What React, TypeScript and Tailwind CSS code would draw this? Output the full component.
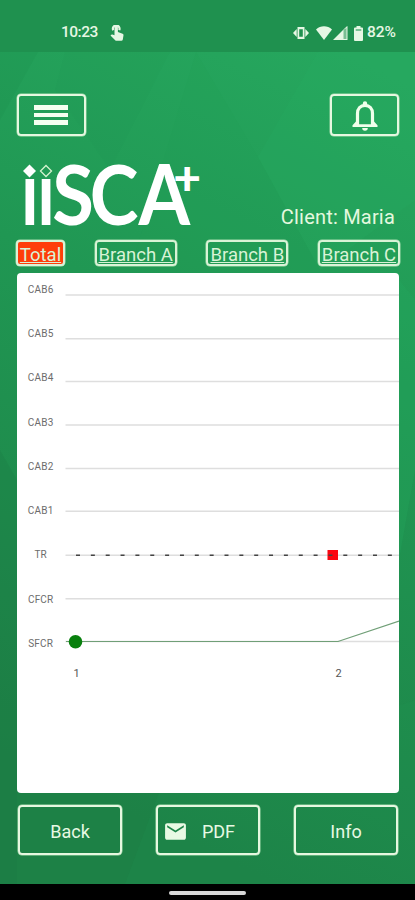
import React, { useState } from 'react';
import { MdEmail } from 'react-icons/md';

interface Tab {
  id: string;
  width: string;
}

const TABS: Tab[] = [
  { id: 'Total', width: 'w-[49px]' },
  { id: 'Branch A', width: 'w-[82px]' },
  { id: 'Branch B', width: 'w-[82px]' },
  { id: 'Branch C', width: 'w-[82px]' },
];

// Chart rows: label centre and grid line position
const ROWS = [
  { label: 'CAB6', labelY: 289, lineY: 295 },
  { label: 'CAB5', labelY: 333.3, lineY: 338.7 },
  { label: 'CAB4', labelY: 377.7, lineY: 381.5 },
  { label: 'CAB3', labelY: 422, lineY: 425 },
  { label: 'CAB2', labelY: 466, lineY: 468.5 },
  { label: 'CAB1', labelY: 510.3, lineY: 511.3 },
  { label: 'TR', labelY: 554.6, lineY: 555.2 },
  { label: 'CFCR', labelY: 599, lineY: 598.8 },
  { label: 'SFCR', labelY: 643.3, lineY: 641.5 },
];

const Background = () => (
  <svg className="absolute inset-0 h-full w-full" viewBox="0 0 415 900" preserveAspectRatio="none" aria-hidden="true">
    <defs>
      <linearGradient id="base" gradientUnits="userSpaceOnUse" x1="400" y1="80" x2="60" y2="780">
        <stop offset="0" stopColor="#26a75e" />
        <stop offset="0.4" stopColor="#209753" />
        <stop offset="1" stopColor="#1d8146" />
      </linearGradient>
    </defs>
    <rect width="415" height="900" fill="url(#base)" />
    <polygon points="0,0 38,52 0,120" fill="#1b8a4a" fillOpacity="0.2" />
    <polygon points="65,52 170,52 110,170 55,90" fill="#1b8a4a" fillOpacity="0.08" />
    <polygon points="196,52 258,157 320,270 130,270" fill="#1f9a52" fillOpacity="0.12" />
    <polygon points="318,52 415,52 415,200 320,270 258,157" fill="#2ab066" fillOpacity="0.2" />
    <polygon points="0,450 17,480 17,900 0,900" fill="#1a7540" fillOpacity="0.2" />
    <polygon points="399,280 415,300 415,470 399,560" fill="#25aa5e" fillOpacity="0.25" />
    <polygon points="160,790 415,700 415,884 125,884" fill="#229b55" fillOpacity="0.15" />
  </svg>
);

const StatusBar = () => (
  <div className="flex h-[52px] items-center justify-between bg-[#1f914f] pl-[61px] pr-[19px] pt-[14px] text-[15.5px] font-medium leading-none tracking-[-0.5px] text-[#e6f7e4]">
    <div className="flex items-center gap-[12px]">
      <span>10:23</span>
      <svg width="14" height="16" viewBox="0 0 14 16" fill="currentColor">
        <path d="M4.500 1.800q0-1.500 1.700-1.500t1.700 1.500V7l4.700 1.700q1 .4.900 1.500l-.7 4.300q-.2 1.300-1.500 1.300H6.500q-.8 0-1.300-.6L.5 10.600l.8-.8q.4-.4 1-.2l2.200.6z" />
        <path d="M3.300 5.300A3.300 3.300 0 1 1 9.200 5.100" fill="none" stroke="currentColor" strokeWidth="2.200" />
      </svg>
    </div>
    <div className="flex items-center">
      <svg width="16" height="12" viewBox="0 0 16 12" fill="currentColor">
        <path fillRule="evenodd" d="M4.500 0h7v12h-7zM6.200 2.200v7.600h3.600V2.200z" />
        <path d="M3.700 2v8L0 6zM12.300 2v8L16 6z" />
      </svg>
      <svg className="ml-[7px]" width="16" height="14" viewBox="0 0 16 14" fill="currentColor">
        <path d="M8 14L0 3.600C4.500-.8 11.500-.8 16 3.600z" />
      </svg>
      <svg className="ml-[1px]" width="15" height="14" viewBox="0 0 15 14" fill="currentColor">
        <path fillOpacity="0.45" d="M10 4l4-4v14h-4z" />
        <path d="M0 14L10.500 3.500V14z" />
        <path d="M10 4L14.500 0v14H9v-1h4.500V2z" />
      </svg>
      <svg className="ml-[6px]" width="9" height="15" viewBox="0 0 9 15" fill="currentColor">
        <path d="M2.500 0h4v1.500H8q1 0 1 1V14q0 1-1 1H1q-1 0-1-1V2.500q0-1 1-1h1.500z" />
        <path fill="#5fb482" d="M1.700 3.200h5.600v1.600H1.700z" />
      </svg>
      <span className="ml-[4px] tracking-[0px]">82%</span>
    </div>
  </div>
);

const Logo = () => (
  <svg className="overflow-visible" width="190" height="70" viewBox="17 160 190 70" fill="white" role="img" aria-label="iiSCA+">
    <polygon points="29.500,164.500 36,171 29.500,177.500 23,171" />
    <polygon points="46,165.500 51.500,171 46,176.500 40.500,171" fill="none" stroke="#d5f3cf" strokeWidth="1.300" />
    <g fontFamily="Lato, sans-serif" fontWeight="700">
      <text transform="translate(21 225) scale(0.77 1)" fontSize="90">ı</text>
      <text transform="translate(37.300 225) scale(0.77 1)" fontSize="90">ı</text>
      <text transform="translate(52.300 225) scale(0.95 1.020)" fontSize="80">S</text>
      <text transform="translate(89.800 225) scale(0.92 1.020)" fontSize="80">C</text>
      <text transform="translate(138.500 225) scale(0.93 1.050)" fontSize="80">A</text>
      <text x="173.300" y="194.500" fontSize="48" fontWeight="900">+</text>
    </g>
  </svg>
);

const BellIcon = () => (
  <svg width="26" height="30" viewBox="0 0 26 30" fill="none">
    <path d="M5.500 25V12.500C5.500 7.500 8.500 4.300 13 4.300s7.500 3.200 7.500 8.200V25" stroke="currentColor" strokeWidth="3.200" />
    <path d="M10.800 4.500V2.500a2.200 2.200 0 0 1 4.400 0v2zM4 20.500l-3.500 3.700V26h25v-1.800L22 20.500v2.800H4zM10.200 27h5.600a2.800 2.800 0 0 1-5.600 0z" fill="currentColor" />
  </svg>
);

const Chart = () => (
  <svg className="block h-full w-full" viewBox="17 273 382 520" fontFamily="Roboto, sans-serif">
    {ROWS.map((row) => (
      <g key={row.label}>
        <text x="40.700" y={row.labelY + 3.500} fontSize="10" letterSpacing="0.200" textAnchor="middle" fill="#6c6c6c">
          {row.label}
        </text>
        <line x1="65.500" x2="399" y1={row.lineY} y2={row.lineY} stroke="#dedede" strokeWidth="1.600" />
      </g>
    ))}
    <rect x="327.500" y="550" width="10.500" height="10" fill="#fb0510" />
    {/* Threshold line */}
    <line x1="76" x2="399" y1="555.200" y2="555.200" stroke="#444" strokeWidth="1.600" strokeDasharray="4 10.850" />
    <polyline points="66,641.500 338,641.500 399,621" fill="none" stroke="#709f77" strokeWidth="1.200" />
    <circle cx="75.500" cy="641.800" r="6.800" fill="#08800d" />
    <text x="76.500" y="677" fontSize="11" textAnchor="middle" fill="#555">1</text>
    <text x="338.500" y="677" fontSize="11" textAnchor="middle" fill="#555">2</text>
  </svg>
);

const FooterButton = ({ children }: { children: React.ReactNode }) => (
  <button className="flex h-[50px] w-[104px] items-center justify-center rounded-[4px] border-2 border-[#e6f8e0] pt-[2px] text-[18px] text-[#e8f9e4] shadow-[0_0_0_0.5px_#a5dcae]">
    {children}
  </button>
);

export default function App() {
  const [activeTab, setActiveTab] = useState('Total');

  return (
    <div className="relative h-[900px] w-[415px] overflow-hidden bg-[#209552] font-['Roboto',sans-serif]">
      <Background />
      <div className="relative flex h-full flex-col">
        <StatusBar />

        {/* Header */}
        <div className="mt-[42px] flex justify-between pl-[17px] pr-[16px]">
          <button aria-label="Menu" className="flex h-[42px] w-[69px] flex-col items-center justify-center gap-[3px] rounded-[4px] border-2 border-[#e6f8e0] pr-[1px] shadow-[0_0_0_0.5px_#a5dcae]">
            <span className="h-[4.5px] w-[34px] bg-[#f5fff0]" />
            <span className="h-[4.5px] w-[34px] bg-[#f5fff0]" />
            <span className="h-[4.5px] w-[34px] bg-[#f5fff0]" />
          </button>
          <button aria-label="Notifications" className="flex h-[42px] w-[69px] items-center justify-center rounded-[4px] border-2 border-[#e6f8e0] pl-[1px] pt-[1px] text-[#f0ffeb] shadow-[0_0_0_0.5px_#a5dcae]">
            <BellIcon />
          </button>
        </div>

        <div className="mt-6 flex h-[70px] items-end justify-between pl-[17px] pr-[20px]">
          <Logo />
          <span className="mb-px whitespace-nowrap text-[20px] leading-[24px] tracking-[0.2px] text-[#e4f8df]">Client: Maria</span>
        </div>

        {/* Tabs */}
        <div className="mt-[10px] flex justify-between pl-[16px] pr-[15px]">
          {TABS.map((tab) => (
            <button
              key={tab.id}
              onClick={() => setActiveTab(tab.id)}
              className={`flex h-[26px] items-end justify-center whitespace-nowrap rounded-[4px] border-2 border-[#d9f3d6] text-[18.5px] leading-[17px] text-[#d9f3d6] underline decoration-1 underline-offset-[1px] shadow-[0_0_0_0.5px_#a5dcae] ${tab.width} ${
                activeTab === tab.id ? 'bg-[#ff3d0a]' : ''
              }`}
            >
              {tab.id}
            </button>
          ))}
        </div>

        <div className="mx-auto mt-[7px] h-[520px] w-[382px] shrink-0 overflow-hidden rounded-[4px] bg-white">
          <Chart />
        </div>

        {/* Footer actions */}
        <div className="mt-[12px] flex justify-between pl-[18px] pr-[17px]">
          <FooterButton>Back</FooterButton>
          <FooterButton>
            <MdEmail className="mr-[14px] h-[25px] w-[25px]" />
            <span className="mr-[18px]">PDF</span>
          </FooterButton>
          <FooterButton>Info</FooterButton>
        </div>

        <div className="mt-auto flex h-4 items-center justify-center bg-black pt-[2px]">
          <div className="h-[4px] w-[77px] rounded-full bg-[#d8d8d8]" />
        </div>
      </div>
    </div>
  );
}
